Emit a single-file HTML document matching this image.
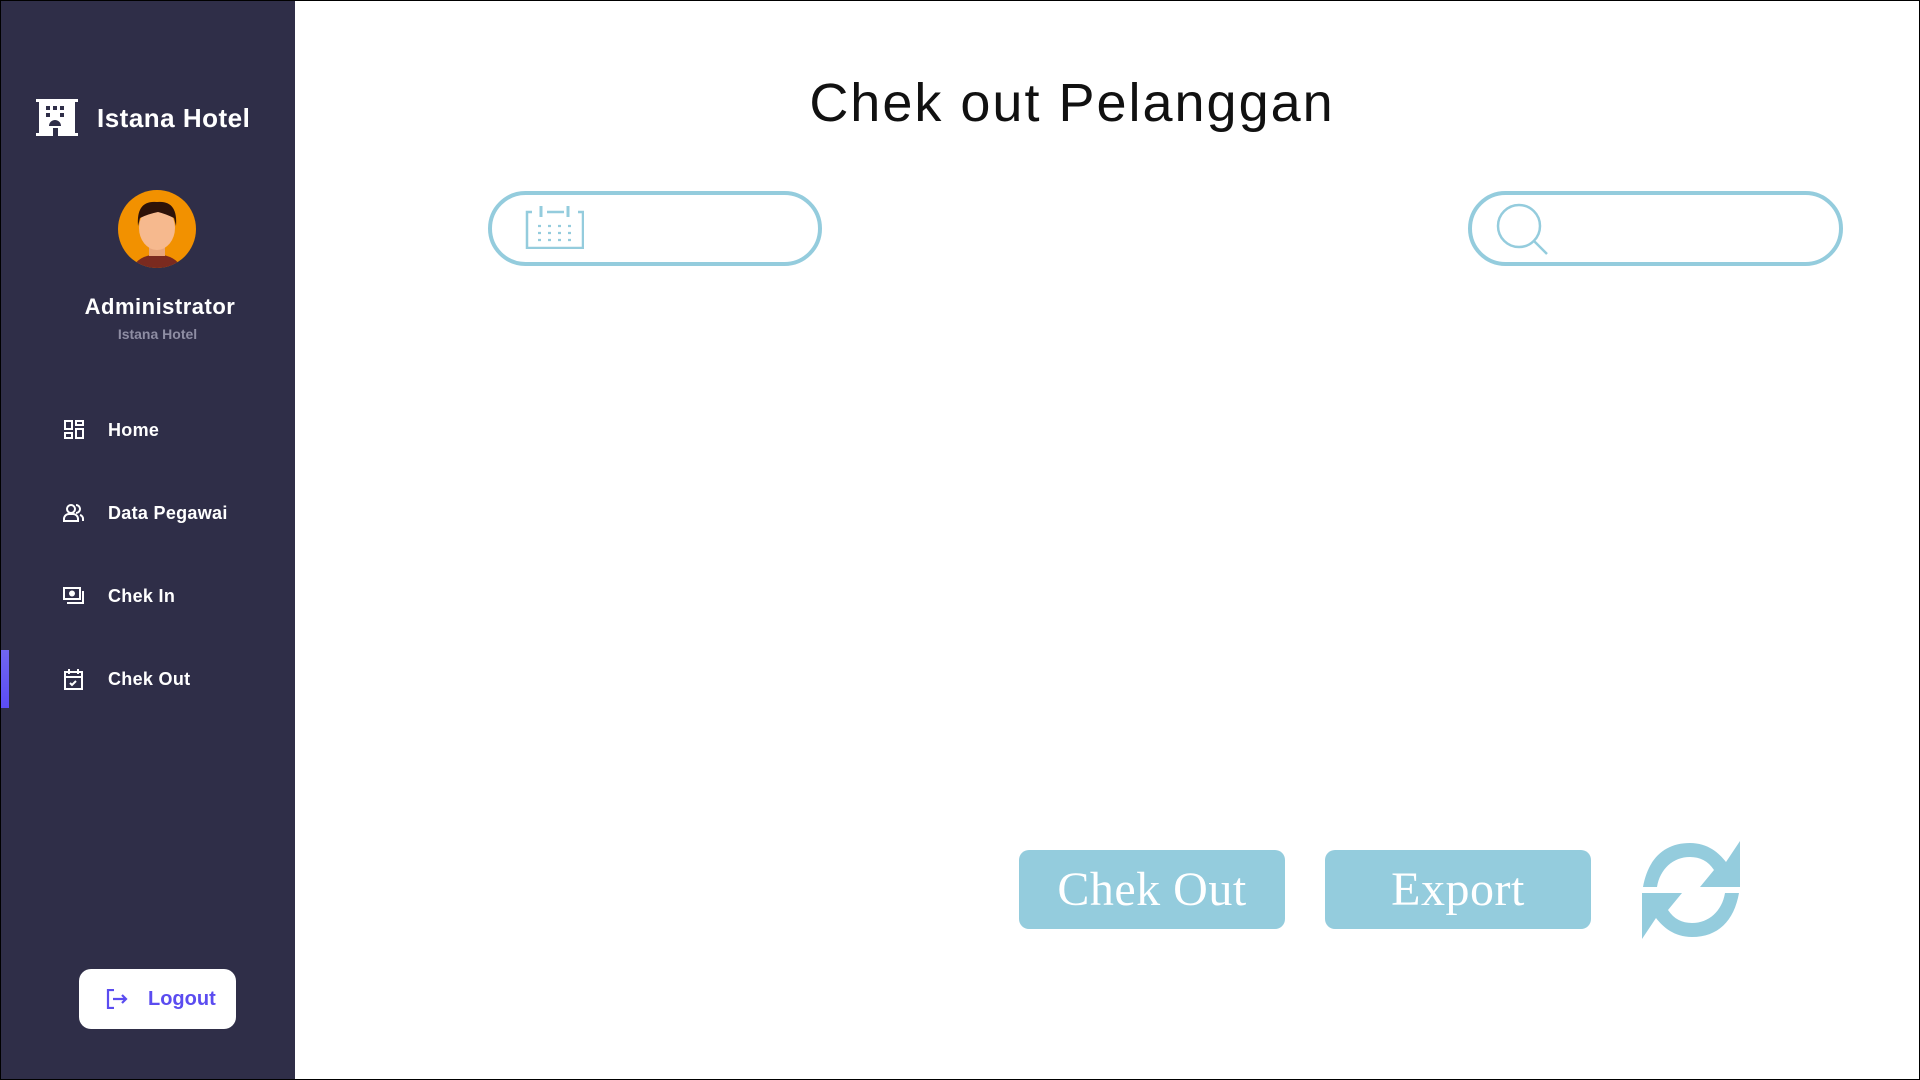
<!DOCTYPE html>
<html><head><meta charset="utf-8"><style>
*{margin:0;padding:0;box-sizing:border-box}
body{width:1920px;height:1080px;position:relative;background:#fff;font-family:"Liberation Sans",sans-serif;overflow:hidden}
.frame{position:absolute;inset:0;border:1px solid #000;pointer-events:none;z-index:5}
.side{position:absolute;left:0;top:0;width:295px;height:1080px;background:#2f2e48}
.abs{position:absolute}
.brand{left:97px;top:103px;color:#fff;font-weight:bold;font-size:26px;letter-spacing:0.5px}
.admin{left:0;width:320px;text-align:center;top:294px;color:#fff;font-weight:bold;font-size:22px;letter-spacing:0.5px}
.sub{left:0;width:315px;text-align:center;top:326px;color:#8e8da3;font-size:14px;font-weight:bold}
.menu{left:108px;color:#fff;font-weight:bold;font-size:18px;letter-spacing:0.3px}
.pill{position:absolute;border:4px solid #94ccdd;border-radius:40px}
.btn{position:absolute;background:#94ccdd;border-radius:10px;color:#fff;font-family:"Liberation Serif",serif;font-size:48px;text-align:center;line-height:79px;letter-spacing:0.5px}
</style></head><body>
<div class="side"></div>
<div class="frame"></div>
<svg class="abs" style="left:36px;top:99px" width="42" height="37" viewBox="0 0 42 37">
<rect x="0" y="0" width="42" height="3" fill="#fff"/><rect x="0" y="34" width="42" height="3" fill="#fff"/>
<rect x="3" y="0" width="36" height="37" fill="#fff"/>
<g fill="#2f2e48"><rect x="10" y="7" width="4" height="4"/><rect x="17" y="7" width="4" height="4"/><rect x="24" y="7" width="4" height="4"/>
<rect x="10" y="14" width="4" height="4"/><rect x="24" y="14" width="4" height="4"/>
<path d="M13 27a6 6 0 0 1 12 0z"/><rect x="17" y="29" width="5" height="8"/></g></svg>
<div class="abs brand">Istana Hotel</div>
<svg class="abs" style="left:118px;top:190px" width="78" height="78" viewBox="0 0 78 78">
<defs><clipPath id="c"><circle cx="39" cy="39" r="39"/></clipPath></defs>
<circle cx="39" cy="39" r="39" fill="#f29100"/>
<g clip-path="url(#c)">
<path d="M14 80 Q18 66 39 64 Q60 66 64 80z" fill="#7a2a1f"/>
<rect x="31" y="52" width="16" height="14" fill="#e8a67c"/>
<ellipse cx="39" cy="38" rx="18" ry="22" fill="#f6b98e"/>
<path d="M20 36 Q18 10 39 12 Q60 10 58 36 L56 28 Q48 24 40 22 Q30 24 22 28z" fill="#2e1208"/>
</g></svg>
<div class="abs admin">Administrator</div>
<div class="abs sub">Istana Hotel</div>
<svg class="abs" style="left:64px;top:420px" width="20" height="20" viewBox="0 0 20 20" fill="none" stroke="#fff" stroke-width="2"><rect x="1" y="1" width="7" height="8"/><rect x="12" y="1" width="7" height="4"/><rect x="1" y="13" width="7" height="5"/><rect x="12" y="9" width="7" height="9"/></svg>
<div class="abs menu" style="top:420px">Home</div>
<svg class="abs" style="left:63px;top:503px" width="22" height="20" viewBox="0 0 22 20" fill="none" stroke="#fff" stroke-width="2"><circle cx="8" cy="6" r="4"/><path d="M1 18v-2a5 5 0 0 1 5-5h4a5 5 0 0 1 5 5v2z"/><path d="M13 2a4 4 0 0 1 0 8M17 12a4 4 0 0 1 3 4v2"/></svg>
<div class="abs menu" style="top:503px">Data Pegawai</div>
<svg class="abs" style="left:63px;top:587px" width="22" height="18" viewBox="0 0 22 18" fill="none" stroke="#fff" stroke-width="2"><rect x="1" y="1" width="16" height="11"/><circle cx="9" cy="6.5" r="2" fill="#fff"/><path d="M20 4v12H4"/></svg>
<div class="abs menu" style="top:586px">Chek In</div>
<div class="abs" style="left:1px;top:650px;width:8px;height:58px;background:linear-gradient(#7066f0,#5b4cf5)"></div>
<svg class="abs" style="left:64px;top:669px" width="20" height="21" viewBox="0 0 20 21" fill="none" stroke="#fff" stroke-width="2"><rect x="1" y="3" width="17" height="17"/><path d="M1 8h17M5 0v5M14 0v5M6 14l2 2 4-4"/></svg>
<div class="abs menu" style="top:669px">Chek Out</div>
<div class="abs" style="left:79px;top:969px;width:157px;height:60px;background:#fff;border-radius:12px"></div>
<svg class="abs" style="left:106px;top:989px" width="22" height="20" viewBox="0 0 22 20" fill="none" stroke="#5b4cf0" stroke-width="2.2"><path d="M8 1H2v18h6M7 10h13M16 6l4 4-4 4"/></svg>
<div class="abs" style="left:148px;top:988px;color:#5b4cf0;font-weight:bold;font-size:20px">Logout</div>
<div class="abs" style="left:295px;width:1554px;text-align:center;top:72px;font-size:54px;color:#111;letter-spacing:2px">Chek out Pelanggan</div>
<div class="pill" style="left:488px;top:191px;width:334px;height:75px"></div>
<svg class="abs" style="left:524px;top:205px" width="60" height="44" viewBox="0 0 60 44" fill="none" stroke="#94ccdd" stroke-width="2.5"><path d="M8 7H3v36h56V7h-5M23 7h17"/><path d="M17 1v11M44 1v11" stroke-width="3"/><g stroke-width="2.2" stroke-dasharray="3 7"><path d="M14 21h40M14 28h40M14 35h40"/></g></svg>
<div class="pill" style="left:1468px;top:191px;width:375px;height:75px"></div>
<svg class="abs" style="left:1496px;top:202px" width="58" height="54" viewBox="0 0 58 54" fill="none" stroke="#94ccdd" stroke-width="2.5"><circle cx="23" cy="24" r="21"/><path d="M38 39l13 13"/></svg>
<div class="btn" style="left:1019px;top:850px;width:266px;height:79px">Chek Out</div>
<div class="btn" style="left:1325px;top:850px;width:266px;height:79px">Export</div>
<svg class="abs" style="left:1642px;top:841px" width="98" height="98" viewBox="0 0 98 98" fill="#94ccdd">
<path d="M1 46 C6 18 22 2 48 2 C66 2 77 12 84 21 L98 0 V46 H58 L72 29 C66 20 58 16 48 16 C31 16 18 28 15 46Z"/>
<path d="M97 52 C92 80 76 96 50 96 C32 96 21 86 14 77 L0 98 V52 H40 L26 69 C32 78 40 82 50 82 C67 82 80 70 83 52Z"/>
</svg>
</body></html>
